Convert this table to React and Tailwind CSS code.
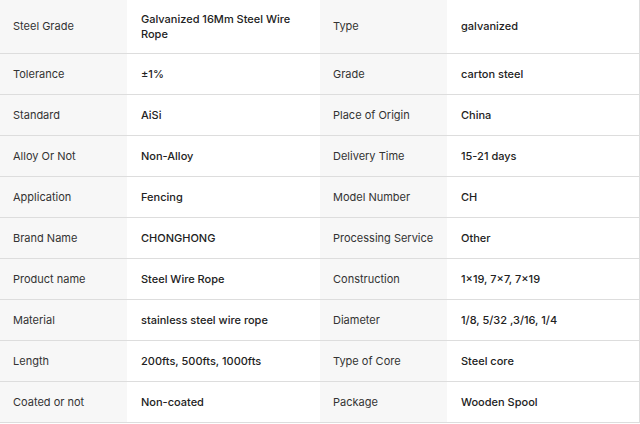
import React from "react";

const rows = [
  ["Steel Grade", "Galvanized 16Mm Steel Wire Rope", "Type", "galvanized"],
  ["Tolerance", "±1%", "Grade", "carton steel"],
  ["Standard", "AiSi", "Place of Origin", "China"],
  ["Alloy Or Not", "Non-Alloy", "Delivery Time", "15-21 days"],
  ["Application", "Fencing", "Model Number", "CH"],
  ["Brand Name", "CHONGHONG", "Processing Service", "Other"],
  ["Product name", "Steel Wire Rope", "Construction", "1×19, 7×7, 7×19"],
  ["Material", "stainless steel wire rope", "Diameter", "1/8, 5/32 ,3/16, 1/4"],
  ["Length", "200fts, 500fts, 1000fts", "Type of Core", "Steel core"],
  ["Coated or not", "Non-coated", "Package", "Wooden Spool"],
];

export default function App() {
  return (
    <div
      className="w-[640px] bg-white text-[11px] leading-[15px]"
      style={{ fontFamily: "Inter, 'Noto Sans', sans-serif" }}
    >
      {rows.map((r, i) => (
        <div
          key={i}
          className={`grid grid-cols-[127px_193px_127px_193px] border-b border-[#dddddd] ${i === 0 ? "h-[54px]" : "h-[41px]"}`}
        >
          <div className="flex items-center bg-[#f7f7f7] pl-[13px] pr-[10px] text-[#333333]">{r[0]}</div>
          <div className="flex items-center pl-[14px] pr-[14px] font-medium text-[#222222]">{r[1]}</div>
          <div className="flex items-center bg-[#f7f7f7] pl-[13px] pr-[10px] text-[#333333]">{r[2]}</div>
          <div className="flex items-center border-r border-[#dddddd] pl-[14px] pr-[14px] font-medium text-[#222222]">{r[3]}</div>
        </div>
      ))}
    </div>
  );
}
